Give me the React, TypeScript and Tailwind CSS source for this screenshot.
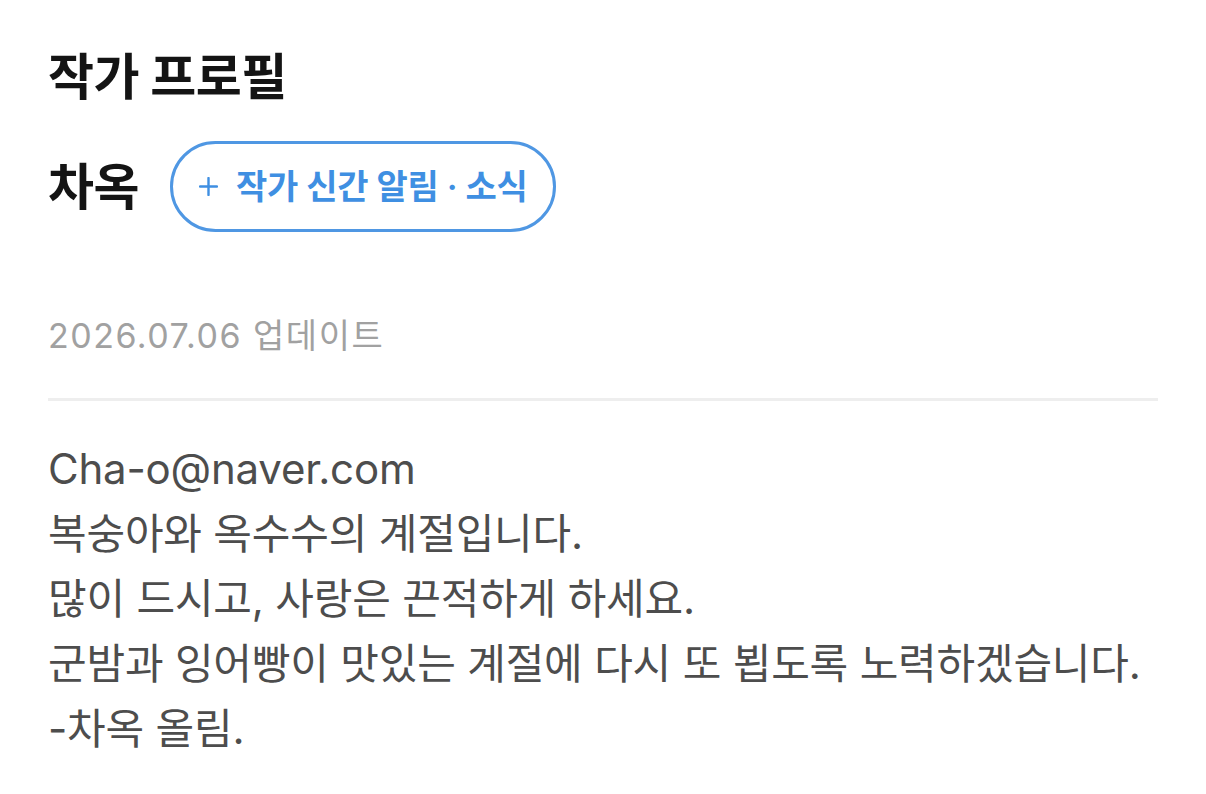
import * as React from "react";

/* Author profile panel: name, follow pill, last-updated stamp and the author's note. */
const note = [
  "Cha-o@naver.com",
  "복숭아와 옥수수의 계절입니다.",
  "많이 드시고, 사랑은 끈적하게 하세요.",
  "군밤과 잉어빵이 맛있는 계절에 다시 또 뵙도록 노력하겠습니다.",
  "-차옥 올림.",
];

function Plus() {
  return (
    <svg width="19" height="19" viewBox="0 0 19 19" className="shrink-0" aria-hidden>
      <path d="M9.5 1v17M1 9.5h17" stroke="currentColor" strokeWidth="2.4" strokeLinecap="round" />
    </svg>
  );
}

export default function App() {
  return (
    <div className="min-h-screen bg-white px-[48px] pt-[47px] font-['Inter','Noto_Sans_CJK_KR',sans-serif]">
      <h1 className="text-[50px] font-bold leading-[60px] tracking-[-0.5px] text-[#141414]">작가 프로필</h1>

      <div className="mt-[34px] flex items-center gap-[31px]">
        <span className="text-[50px] font-bold leading-[60px] tracking-[-0.5px] text-[#141414]">차옥</span>
        <button className="flex h-[91px] items-center gap-[18px] rounded-full border-[3px] border-[#4f97e3] pl-[26px] pr-[26px] text-[34px] font-semibold leading-none tracking-[-0.3px] text-[#3f8fe2]">
          <Plus />
          작가 신간 알림 · 소식
        </button>
      </div>

      <p className="mt-[82px] text-[34px] leading-[44px] tracking-[1.5px] text-[#a1a1a1]">2026.07.06 업데이트</p>

      <div className="mt-[40px] h-[3px] bg-[#eeeeee]" />

      <div className="mt-[35px] text-[42px] leading-[65px] tracking-[-0.2px] text-[#4d4d4d]">
        {note.map((line) => (
          <p key={line}>{line}</p>
        ))}
      </div>
    </div>
  );
}
